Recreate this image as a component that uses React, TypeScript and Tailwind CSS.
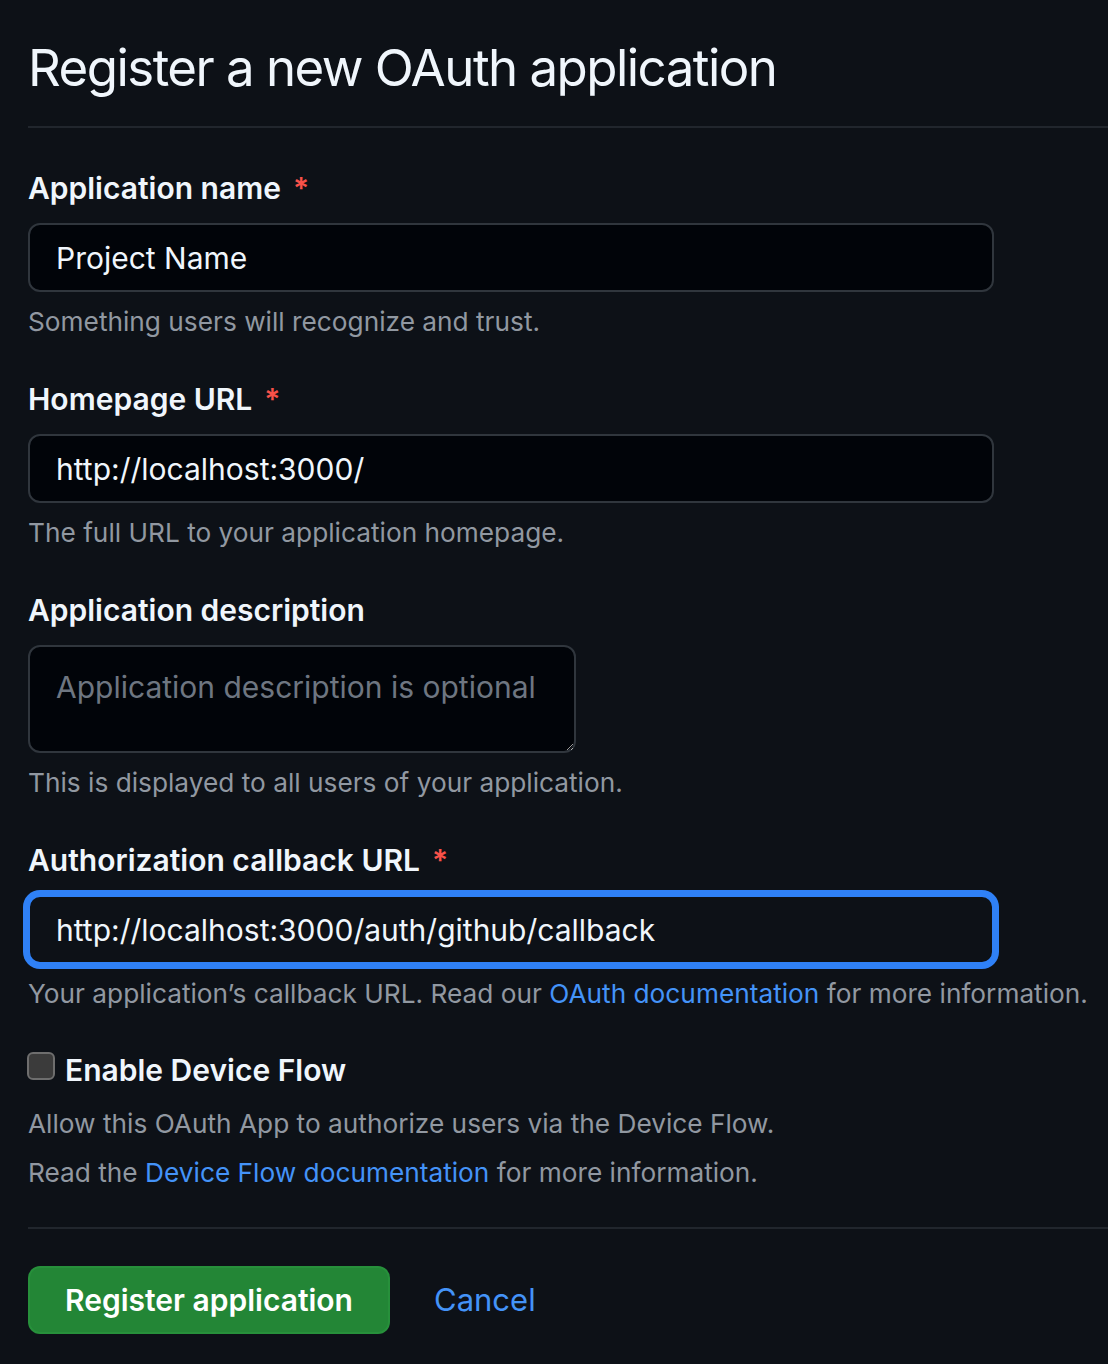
import React from "react";

function Label({ children, required }: { children: React.ReactNode; required?: boolean }) {
  return (
    <div className="flex h-[40px] items-center text-[30px] font-semibold leading-[40px] text-[#f0f6fc]">
      <span>{children}</span>
      {required && <span className="ml-[12px] text-[#f85149]">*</span>}
    </div>
  );
}

function Note({ children }: { children: React.ReactNode }) {
  return <p className="mt-[10px] h-[40px] text-[26.25px] leading-[40px] text-[#9198a1]">{children}</p>;
}

const inputBase =
  "block h-[69px] w-[966px] rounded-[12px] border-2 px-[26px] text-[30px] text-[#f0f6fc] outline-none";

export default function App() {
  return (
    <div
      className="min-h-[1364px] w-[1108px] overflow-hidden bg-[#0d1117] pl-[28px] text-[#f0f6fc]"
      style={{ fontFamily: "Inter, 'Noto Sans', 'Liberation Sans', sans-serif" }}
    >
      <div className="mr-[-28px] border-b-2 border-[#21262d] pt-[36px] pb-[26px]">
        <h1 className="text-[51px] font-normal leading-[64px] tracking-[-0.03em]">Register a new OAuth application</h1>
      </div>

      <form className="pt-[40px]">
        <Label required>Application name</Label>
        <input readOnly value="Project Name" className={`mt-[15px] border-[#30363d] bg-[#010409] ${inputBase}`} />
        <Note>Something users will recognize and trust.</Note>

        <div className="mt-[37px]">
          <Label required>Homepage URL</Label>
        </div>
        <input
          readOnly
          value="http://localhost:3000/"
          className={`mt-[15px] border-[#30363d] bg-[#010409] ${inputBase}`}
        />
        <Note>The full URL to your application homepage.</Note>

        <div className="mt-[37px]">
          <Label>Application description</Label>
        </div>
        <textarea
          readOnly
          placeholder="Application description is optional"
          className="mt-[15px] block h-[108px] w-[548px] resize rounded-[12px] border-2 border-[#30363d] bg-[#010409] px-[26px] pt-[20px] text-[30px] leading-[40px] text-[#f0f6fc] outline-none placeholder:text-[#6e7681]"
        />
        <Note>This is displayed to all users of your application.</Note>

        <div className="mt-[37px]">
          <Label required>Authorization callback URL</Label>
        </div>
        <input
          readOnly
          value="http://localhost:3000/auth/github/callback"
          className={`mt-[15px] border-[#2f81f7] bg-[#0d1117] shadow-[0_0_0_5px_#2f81f7] ${inputBase}`}
        />
        <Note>
          Your application’s callback URL. Read our <a className="text-[#4493f8]">OAuth documentation</a> for more
          information.
        </Note>

        <div className="mt-[36px] flex h-[40px] items-start">
          <span className="ml-[-1px] mr-[10px] mt-[2px] block h-[28px] w-[28px] rounded-[6px] border-2 border-[#6e6e6e] bg-[#3b3b3b]" />
          <span className="text-[30px] font-semibold leading-[40px] text-[#f0f6fc]">Enable Device Flow</span>
        </div>
        <p className="mt-[14px] h-[40px] text-[26.25px] leading-[40px] text-[#9198a1]">
          Allow this OAuth App to authorize users via the Device Flow.
        </p>
        <p className="mt-[9px] h-[40px] text-[26.25px] leading-[40px] text-[#9198a1]">
          Read the <a className="text-[#4493f8]">Device Flow documentation</a> for more information.
        </p>

        <div className="mr-[-28px] mt-[34px] border-t-2 border-[#21262d]" />

        <div className="mt-[37px] flex items-center">
          <button
            type="button"
            className="h-[68px] w-[362px] rounded-[12px] border-2 border-[#2ea04366] bg-[#238636] text-[30px] font-semibold text-white"
          >
            Register application
          </button>
          <a className="ml-[44px] text-[31px] text-[#4493f8]">Cancel</a>
        </div>
      </form>
    </div>
  );
}
